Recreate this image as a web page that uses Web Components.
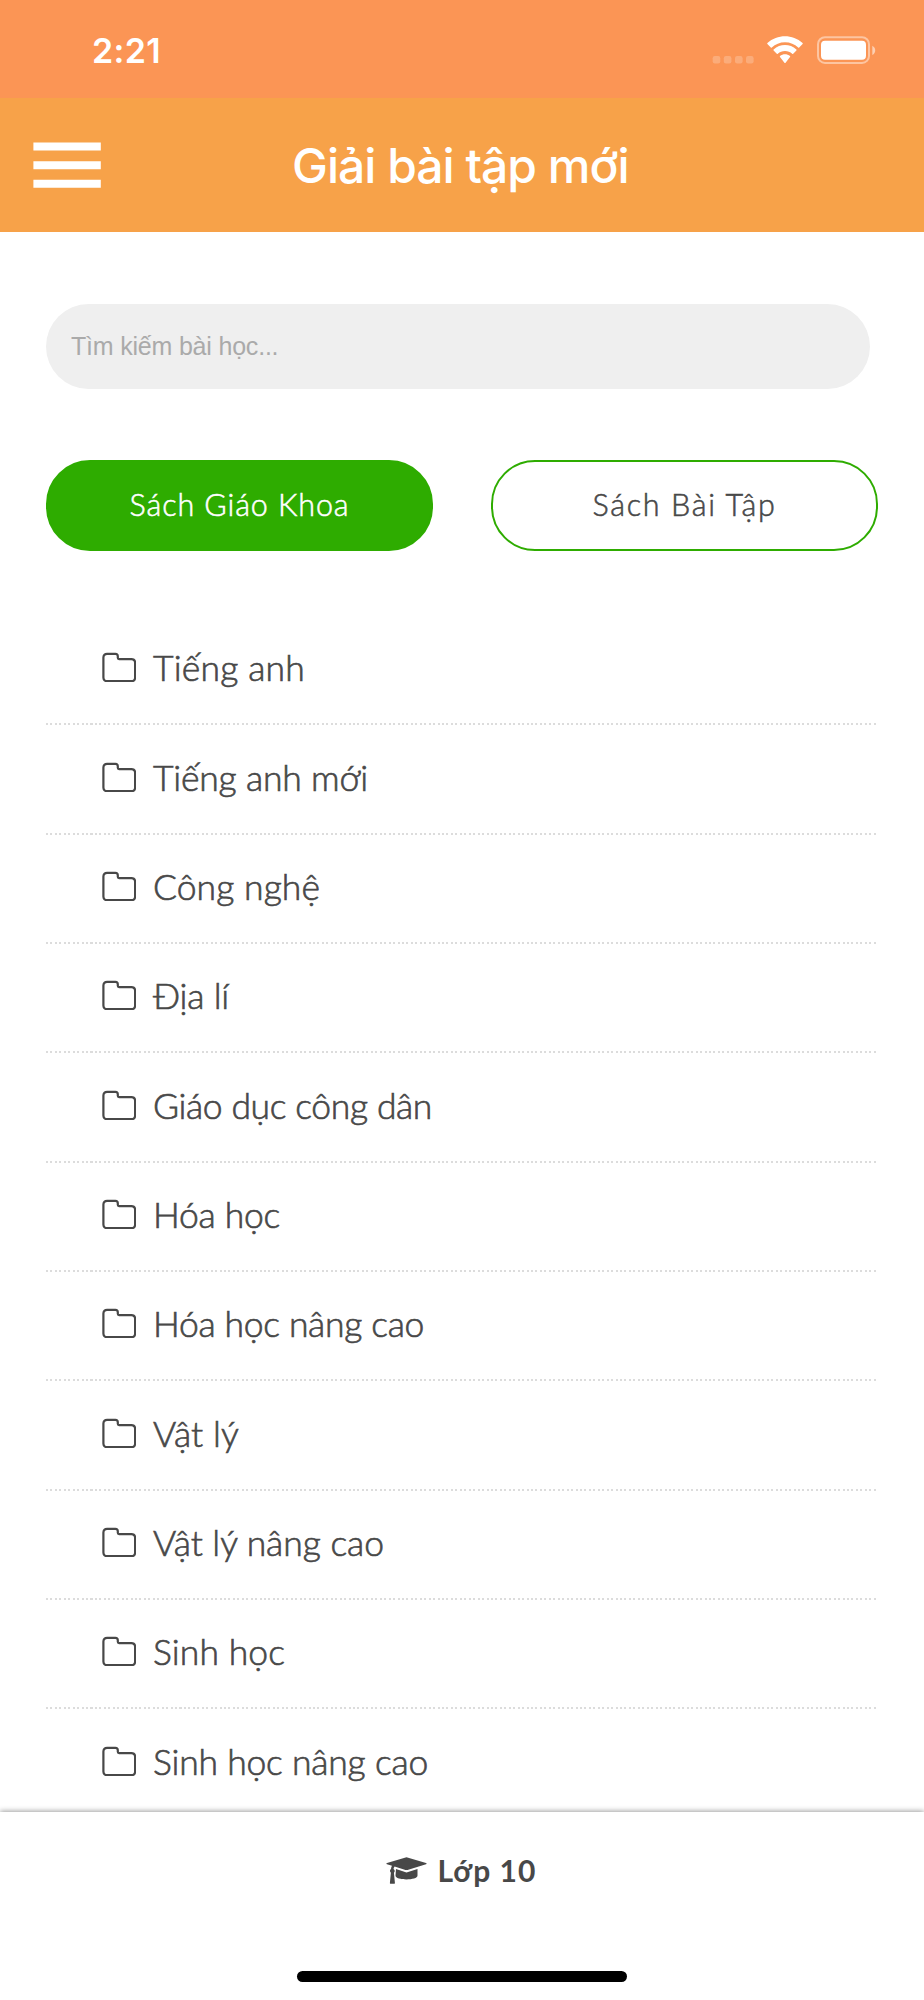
<!DOCTYPE html>
<html lang="vi">
<head>
<meta charset="utf-8">
<title>Giải bài tập mới</title>
<style>
html,body{margin:0;background:#fff;color:#484848;font-family:Lato,"Noto Sans",sans-serif}
</style>
</head>
<body>
<lesson-app></lesson-app>
<script>
const define = (name, html, setup) => {
  const t = document.createElement('template');
  t.innerHTML = html;
  customElements.define(name, class extends HTMLElement {
    connectedCallback() {
      if (this.shadowRoot) return;
      this.attachShadow({ mode: 'open' }).append(t.content.cloneNode(true));
      if (setup) setup(this, this.shadowRoot);
    }
  });
};

// Text tracked so that its advance width equals the "w" attribute.
define('fit-text', `<style>:host{display:block;white-space:nowrap}span{display:inline-block}</style><span><slot></slot></span>`, (el, root) => {
  const span = root.querySelector('span');
  const w = +el.getAttribute('w');
  const n = [...el.textContent].length;
  const natural = span.getBoundingClientRect().width;
  span.style.letterSpacing = ((w - natural) / n) + 'px';
});

define('status-bar', `<style>
:host{display:flex;box-sizing:border-box;height:98px;background:#fb9555;color:#fff;padding:0 48px 0 92px;justify-content:space-between;font:600 34px/102px Inter,sans-serif}
.icons{display:block;width:166px;height:98px}
</style><fit-text w="69">2:21</fit-text>
<svg class="icons" viewBox="710 0 166 98" fill="#fff">
<g opacity=".22"><rect x="712.7" y="56" width="7.6" height="7.4" rx="2.2"/><rect x="723.8" y="56" width="7.6" height="7.4" rx="2.2"/><rect x="735" y="56" width="7.6" height="7.4" rx="2.2"/><rect x="746" y="56" width="7.6" height="7.4" rx="2.2"/></g>
<path d="M785 42.2c5.100 0 9.700 2 13.200 5.200.3.300.7.300 1 0l3.400-3.400c.3-.3.300-.8 0-1.100-10-9-25.200-9-35.200 0-.3.300-.3.800 0 1.100l3.400 3.400c.3.300.7.300 1 0 3.500-3.200 8.100-5.200 13.200-5.200zM785 51c2.800 0 5.300 1 7.200 2.700.3.300.7.300 1 0l3.200-3.300c.3-.3.300-.7 0-1-6.400-5.800-16.400-5.800-22.800 0-.3.300-.3.700 0 1l3.200 3.300c.3.300.7.300 1 0 1.900-1.700 4.400-2.700 7.200-2.700zM790 57c.3-.3.300-.7 0-1-2.900-2.400-7.100-2.400-10 0-.3.300-.3.700 0 1l4.400 5.700c.4.400.8.400 1.200 0z"/>
<rect x="818" y="37.200" width="51" height="25.700" rx="7" fill="none" stroke="#fff" stroke-width="2" opacity=".45"/>
<rect x="821" y="40.800" width="45" height="19" rx="4"/>
<path d="M872.300 45.800c3.900 2 3.900 7.200 0 9.200z" opacity=".55"/>
</svg>`);

define('app-header', `<style>
:host{display:grid;grid-template-columns:292px 1fr;height:134px;background:#f7a249;color:#fff;align-items:center}
svg{display:block;width:68px;height:46px;margin-left:33px}
fit-text{font:500 48px/60px Inter,sans-serif;padding-top:2px}
</style><svg viewBox="0 0 68 46" fill="#fff"><path d="M.4.600h67.400v8H.400zM.4 19.200h67.400v8H.400zM.4 37.800h67.400v8H.400z"/></svg>
<fit-text w="338"><slot></slot></fit-text>`);

define('search-box', `<style>
:host{display:block;width:824px;height:85px;border-radius:42.500px;background:#efefef}
input{box-sizing:border-box;width:100%;height:100%;border:0;outline:0;background:none;padding:0 25px;font:25px "Liberation Sans",Arial,sans-serif;letter-spacing:-.2px}
input::placeholder{color:#aaa;opacity:1}
</style><input placeholder="Tìm kiếm bài học...">`);

define('pill-button', `<style>
:host{display:flex;box-sizing:border-box;width:387px;height:91px;border:2px solid #2eac00;border-radius:44px;align-items:center;justify-content:center;font-size:30.500px;font-weight:300;-webkit-text-stroke:.55px currentColor;line-height:40px;padding-bottom:3px}
:host([active]){background:#2eac00;color:#fff}
</style><slot></slot>`);

define('subject-row', `<style>
:host{display:flex;box-sizing:border-box;height:109.350px;padding:0 0 5px 57px;align-items:center;background:repeating-linear-gradient(90deg,#dcdcdc 0 2px,transparent 2px 4.450px) bottom/100% 2px no-repeat;font-size:35.500px;font-weight:300;-webkit-text-stroke:.65px currentColor;line-height:48px}
svg{display:block;width:34px;height:30px;margin:-2px 17px 0 -1px}
</style><svg viewBox="0 0 34 30" fill="none" stroke="#484848" stroke-width="2.200" stroke-linejoin="round"><path d="M5.100 1.900h8.300c1.500 0 2.400.9 2.400 2.400v1.500c0 .8.500 1.300 1.300 1.300h12.300c2.300 0 3.700 1.400 3.700 3.700v14.700c0 2.300-1.400 3.700-3.700 3.700H5.100c-2.300 0-3.700-1.400-3.700-3.700V5.600c0-2.300 1.400-3.700 3.700-3.700z"/></svg><slot></slot>`);

define('grade-bar', `<style>
:host{display:flex;flex-direction:column;box-sizing:border-box;height:188px;flex:none;align-items:center;background:#fff;box-shadow:0 -1px 5px rgba(0,0,0,.38);padding-top:37px;position:relative}
.label{display:flex;align-items:center;font-weight:700;font-size:30px;line-height:42px;height:42px;margin-right:2px}
svg{display:block;width:41px;height:28px;margin:1px 11px 0 0}
.home{width:330px;height:11px;border-radius:6px;background:#000;margin-top:auto;margin-bottom:18px}
</style><div class="label"><svg viewBox="0 0 41 28" fill="#484848"><path d="M20.500.200 40 6c.8.300.8.900 0 1.200l-18.500 5.700c-.7.200-1.300.200-2 0L8.600 9.500c-.7.700-1 1.500-1.100 2.500 1.400.7 1.700 2.600.4 3.700l1 10.100c.1.600-.2 1-.8 1H4.700c-.6 0-.9-.4-.8-1l1-10.100c-1.300-1-1.200-2.800.1-3.700.1-1.300.4-2.400 1-3.300L1 7.200C.2 6.900.2 6.300 1 6z"/><path d="m10 12 10.500 3.500L31.500 12v6.500c0 5.200-22 5.200-22 0z"/></svg><slot></slot></div><div class="home"></div>`);

define('lesson-app', `<style>
:host{display:flex;flex-direction:column;width:924px;height:2000px;overflow:hidden}
main{flex:1;min-height:0;overflow:hidden;padding:72px 46px 0}
nav{display:flex;justify-content:space-between;margin:71px 0 65px}
section{display:block}
</style><status-bar></status-bar><app-header>Giải bài tập mới</app-header>
<main><search-box></search-box>
<nav><pill-button active><fit-text w="220">Sách Giáo Khoa</fit-text></pill-button><pill-button><fit-text w="184">Sách Bài Tập</fit-text></pill-button></nav>
<section></section></main><grade-bar><fit-text w="99">Lớp 10</fit-text></grade-bar>`, (el, root) => {
  const list = root.querySelector('section');
  for (const [name, w] of [['Tiếng anh',152],['Tiếng anh mới',215],['Công nghệ',167],['Địa lí',76],['Giáo dục công dân',279],['Hóa học',127],['Hóa học nâng cao',271],['Vật lý',86],['Vật lý nâng cao',231],['Sinh học',132],['Sinh học nâng cao',275]]) {
    const row = document.createElement('subject-row');
    const text = document.createElement('fit-text');
    text.setAttribute('w', w);
    text.textContent = name;
    row.append(text);
    list.append(row);
  }
});
// The header's label arrives through a slot, so its tracking is fitted here.
{
  const label = document.querySelector('lesson-app').shadowRoot.querySelector('app-header').shadowRoot.querySelector('fit-text');
  const span = label.shadowRoot.querySelector('span');
  span.style.letterSpacing = '0';
  span.style.letterSpacing = (336.5 - span.getBoundingClientRect().width) / 16 + 'px';
}
</script>
</body>
</html>
